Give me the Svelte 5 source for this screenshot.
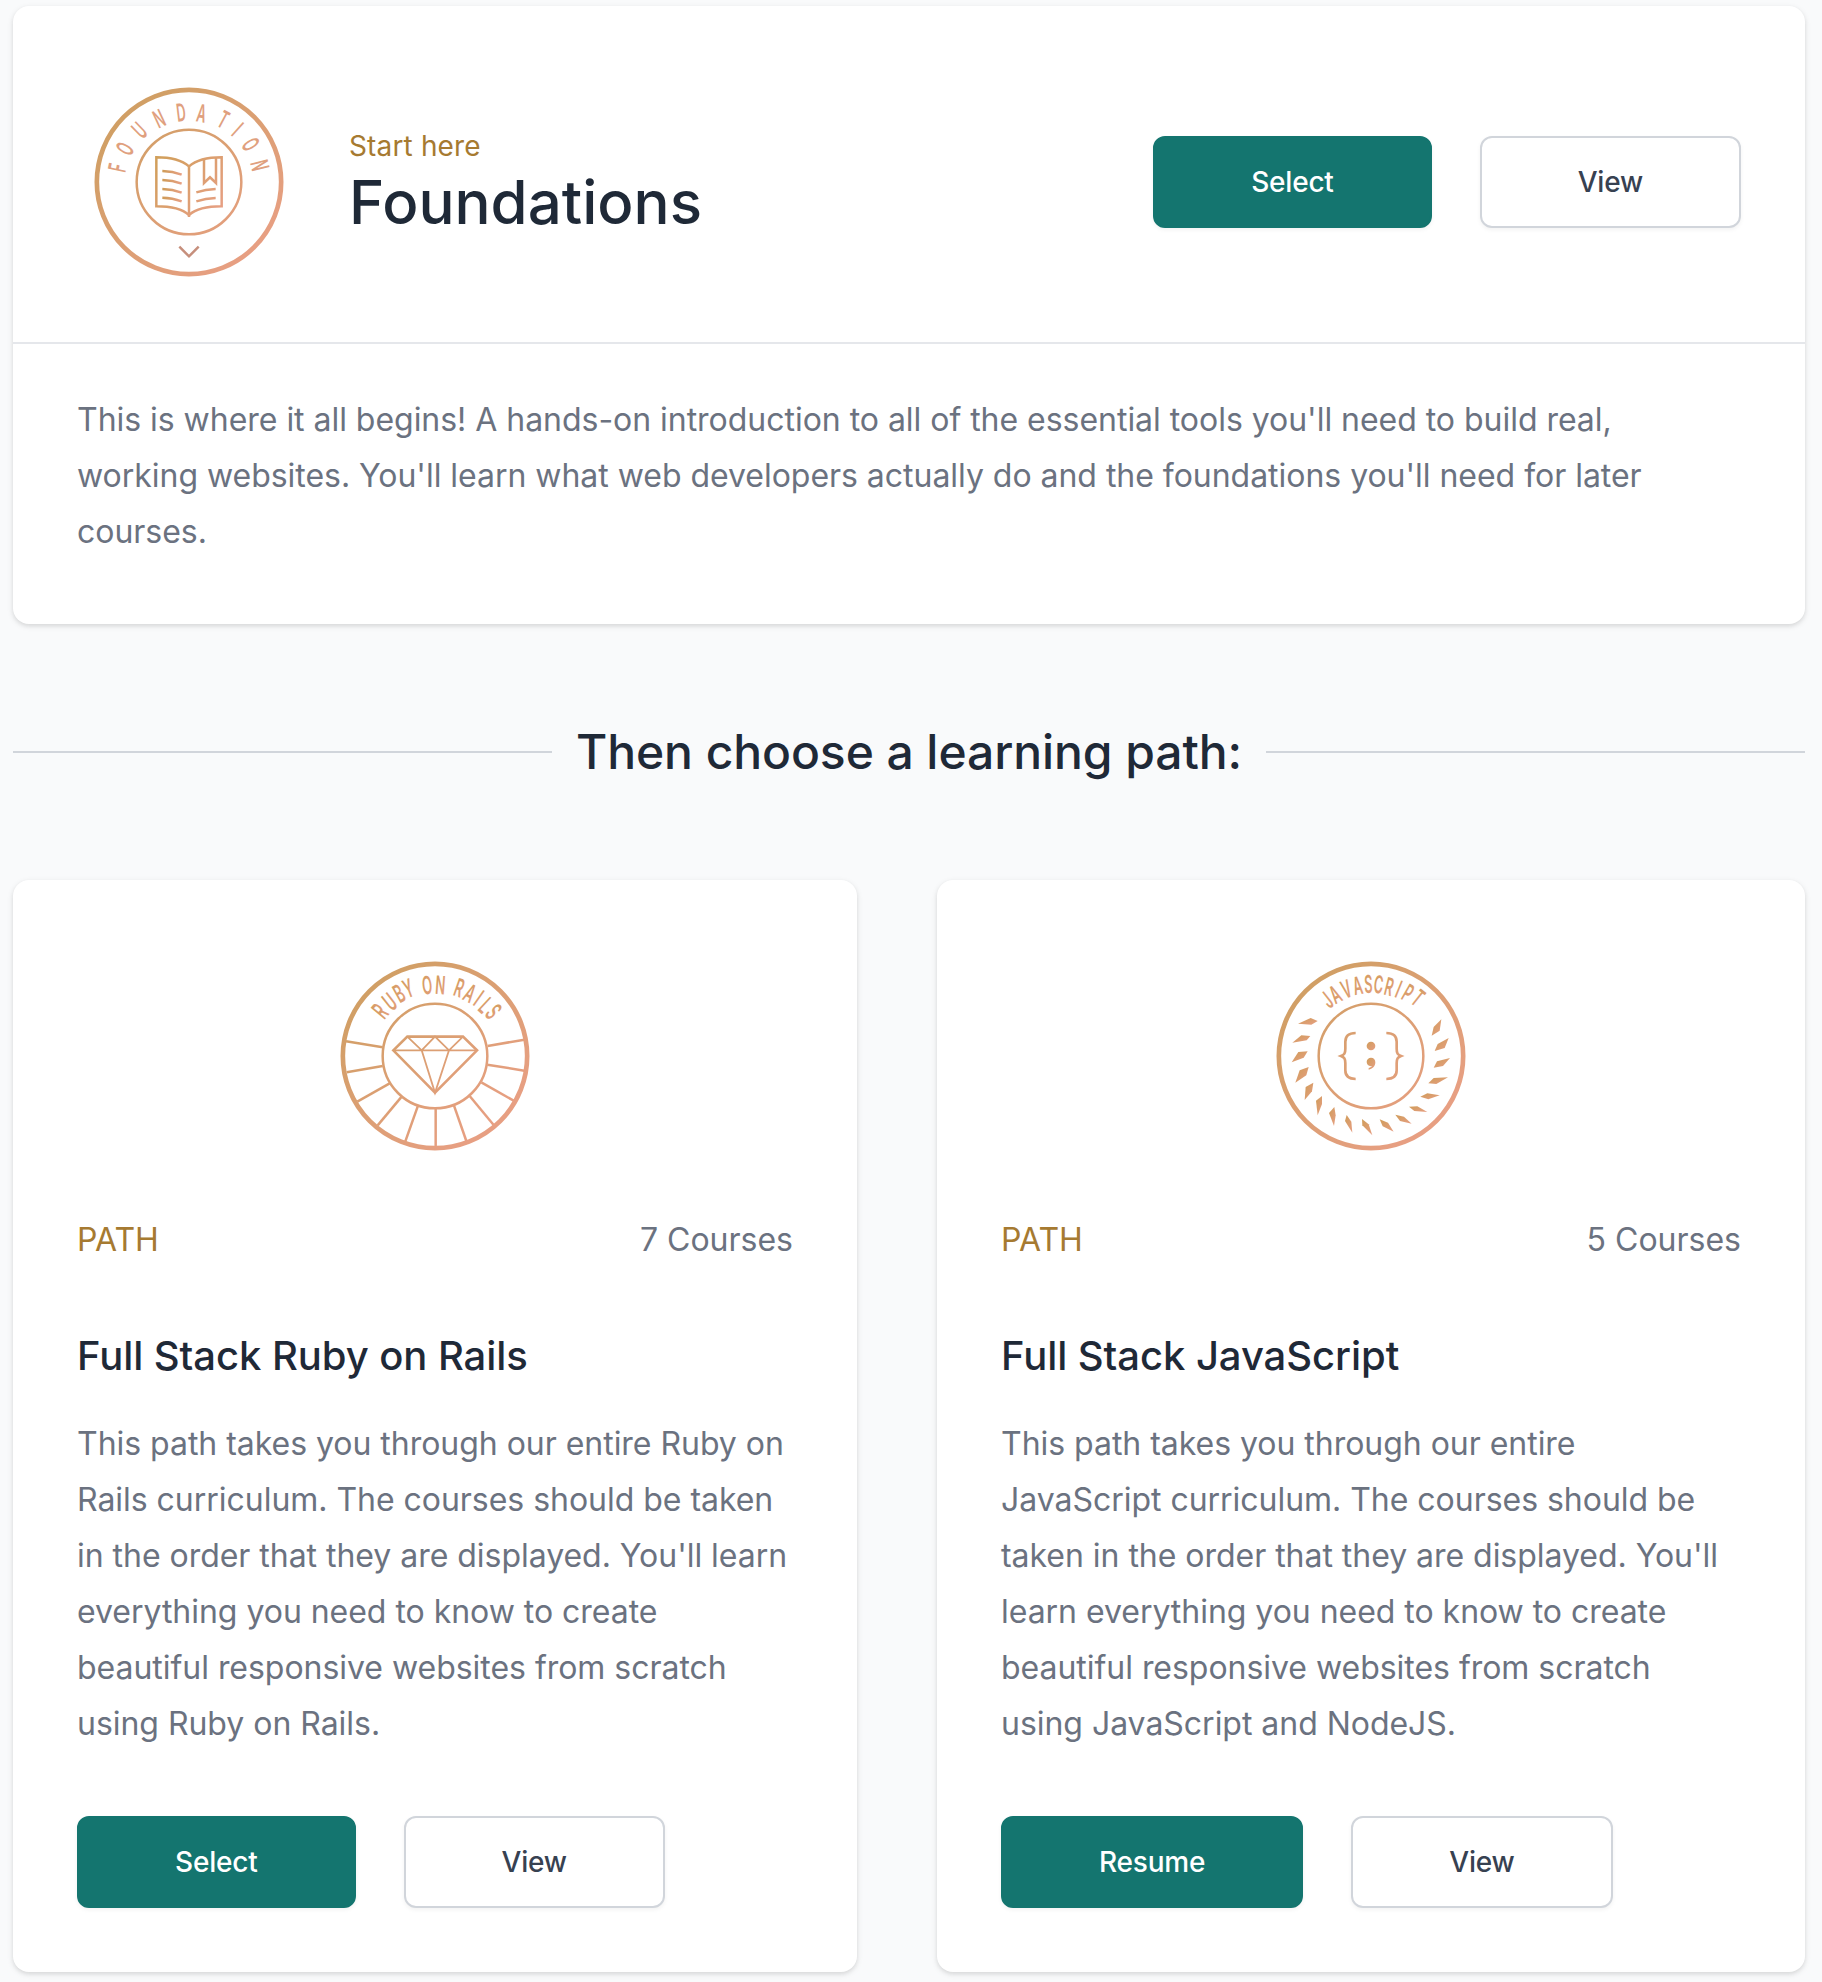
<script>
  // Curved badge lettering: [character, x, y, rotation in degrees]
  const foundation = [
    ['F', 100, 275, -78], ['O', 123, 218, -62], ['U', 166, 163, -44], ['N', 225, 128, -25],
    ['D', 291, 109, -7], ['A', 353, 112, 10], ['T', 418, 130, 28], ['I', 461, 160, 42],
    ['O', 500, 205, 59], ['N', 528, 268, 76]
  ];
  const ruby = [
    ['R', 150, 213, -50], ['U', 179, 185, -38], ['B', 207, 160, -29], ['Y', 235, 145, -20],
    ['O', 291, 135, -6], ['N', 331, 135, 4], ['R', 388, 143, 19], ['A', 420, 159, 28],
    ['I', 446, 174, 35], ['L', 467, 196, 43], ['S', 491, 215, 50]
  ];
  const javascript = [
    ['J', 183, 180, -38], ['A', 208, 163, -29], ['V', 241, 147, -20], ['A', 275, 137, -11],
    ['S', 307, 132, -2], ['C', 338, 133, 6], ['R', 370, 140, 14], ['I', 398, 147, 22],
    ['P', 426, 158, 30], ['T', 456, 173, 38]
  ];
  const rays = [
    [158, 322, 48, 304], [158, 378, 50, 397], [179, 430, 82, 485], [215, 470, 143, 556],
    [264, 497, 226, 604], [317, 507, 317, 620], [372, 497, 409, 603], [419, 468, 491, 555],
    [454, 427, 551, 482], [472, 374, 583, 392], [473, 318, 583, 299]
  ];
  const leaves = [
    '96,251 134,234 155,243 136,254', '79,308 106,286 133,288 122,301',
    '77,367 97,336 125,334 113,353', '88,428 101,391 128,381 121,406',
    '116,480 119,441 142,428 138,454', '155,526 150,482 168,468 168,492',
    '204,558 189,519 205,501 209,526', '259,578 237,543 242,525 256,545',
    '319,586 289,556 288,537 308,553', '383,575 350,559 341,538 366,548',
    '437,551 402,543 388,524 414,530', '484,516 445,513 429,500 454,499',
    '521,466 487,478 463,470 484,460', '546,412 511,432 487,430 503,414',
    '552,354 531,378 503,383 513,364', '548,294 536,324 506,333 515,312',
    '526,238 521,272 497,287 503,261'
  ];

  const paths = [
    {
      badge: 'ruby', courses: 7, title: 'Full Stack Ruby on Rails', action: 'Select',
      text: "This path takes you through our entire Ruby on Rails curriculum. The courses should be taken in the order that they are displayed. You'll learn everything you need to know to create beautiful responsive websites from scratch using Ruby on Rails."
    },
    {
      badge: 'javascript', courses: 5, title: 'Full Stack JavaScript', action: 'Resume',
      text: "This path takes you through our entire JavaScript curriculum. The courses should be taken in the order that they are displayed. You'll learn everything you need to know to create beautiful responsive websites from scratch using JavaScript and NodeJS."
    }
  ];
</script>

{#snippet lettering(letters, size, fill)}
  {#each letters as [ch, x, y, r]}
    <text class="rune" font-size={size} {fill} transform="translate({x} {y}) rotate({r}) scale(.52 1)" y={size * 0.364}>{ch}</text>
  {/each}
{/snippet}

<svg class="defs" width="0" height="0" aria-hidden="true">
  <defs>
    <linearGradient id="copper" gradientUnits="userSpaceOnUse" x1="120" y1="150" x2="480" y2="540">
      <stop offset="0" stop-color="#d19f65" /><stop offset="1" stop-color="#e79f82" />
    </linearGradient>
    <linearGradient id="book" gradientUnits="userSpaceOnUse" x1="220" y1="250" x2="410" y2="410">
      <stop offset="0" stop-color="#d19f5b" /><stop offset="1" stop-color="#e79f84" />
    </linearGradient>
    <linearGradient id="part" x1="0" y1="0" x2="1" y2="1">
      <stop offset="0" stop-color="#cf9c58" /><stop offset="1" stop-color="#e79f84" />
    </linearGradient>
    <linearGradient id="row" gradientUnits="userSpaceOnUse" x1="236" y1="0" x2="294" y2="0">
      <stop offset="0" stop-color="#cf9c58" /><stop offset="1" stop-color="#e79f84" />
    </linearGradient>
  </defs>
</svg>

<main>
  <section class="card">
    <header>
      <svg class="badge" viewBox="27 30 576 576" fill="none" stroke="url(#copper)">
        <circle cx="315" cy="318" r="276.500" stroke-width="14" />
        <circle cx="315" cy="318" r="157" stroke-width="7.500" />
        <g stroke="url(#book)" stroke-width="7.500">
          <path d="M315 271Q284 244 217 244V391Q286 391 315 417Q345 391 413 391V244Q346 244 315 271Z" />
          <path d="M315 271V423M360 249V321L378 304L396 321V246" />
          <path d="M337 349Q365 340 395 339M337 376Q365 367 395 366" />
        </g>
        <g stroke="url(#row)" stroke-width="7.500">
          <path d="M235 285Q266 286 293 296M235 312Q266 313 293 323M235 339Q266 340 293 350M235 365Q266 366 293 376" />
        </g>
        <path d="M286 512L315 541L344 512" stroke="#c68f7c" stroke-width="7.500" />
        <g stroke="none">{@render lettering(foundation, 74, '#e0a07e')}</g>
      </svg>
      <div class="heading">
        <p class="eyebrow">Start here</p>
        <h1>Foundations</h1>
      </div>
      <div class="actions">
        <button class="primary">Select</button>
        <button>View</button>
      </div>
    </header>
    <p class="intro">This is where it all begins! A hands-on introduction to all of the essential tools you'll need to build real, working websites. You'll learn what web developers actually do and the foundations you'll need for later courses.</p>
  </section>

  <div class="divider"><h2>Then choose a learning path:</h2></div>

  <div class="paths">
    {#each paths as path}
      <article class="card path">
        <svg class="badge" viewBox="27 60 576 576" fill="none" stroke="url(#copper)">
          <circle cx="315" cy="348" r="276.500" stroke-width="14" />
          <circle cx="315" cy="348" r="157" stroke-width="7.500" />
          {#if path.badge === 'ruby'}
            {#each rays as [x1, y1, x2, y2]}
              <path d="M{x1} {y1}L{x2} {y2}" stroke-width="7.500" />
            {/each}
            <path d="M190 331L232 290H399L441 331L315 458Z" stroke-width="8" />
            <path d="M190 331H441M232 290L275 331L315 290L357 331L399 290M275 331L315 458L357 331" stroke-width="5.500" />
            <g stroke="none">{@render lettering(ruby, 76, 'url(#part)')}</g>
          {:else}
            {#each leaves as points}
              <polygon {points} fill="url(#part)" stroke="none" />
            {/each}
            <path d="M269 279C247 279 238 289 238 305V326C238 340 235 344 225 348C235 352 238 356 238 370V391C238 407 247 417 269 417" stroke-width="8" />
            <path d="M361 279C383 279 392 289 392 305V326C392 340 395 344 405 348C395 352 392 356 392 370V391C392 407 383 417 361 417" stroke-width="8" />
            <g fill="url(#part)" stroke="none">
              <circle cx="315" cy="318" r="13" />
              <path d="M315 353C323 353 328 359 328 367C328 379 319 387 308 389V384C315 382 318 379 318 378C309 380 302 374 302 366C302 358 308 353 315 353Z" />
            </g>
            <g stroke="none">{@render lettering(javascript, 74, 'url(#part)')}</g>
          {/if}
        </svg>
        <div class="meta"><span class="label">PATH</span><span>{path.courses} Courses</span></div>
        <h3>{path.title}</h3>
        <p class="summary">{path.text}</p>
        <div class="actions">
          <button class="primary">{path.action}</button>
          <button>View</button>
        </div>
      </article>
    {/each}
  </div>
</main>

<style>
  :global(body) { background: #f9fafb; }
  * { box-sizing: border-box; }
  h1, h2, h3, p { margin: 0; font-weight: 500; }
  .defs { display: block; }
  main {
    padding: 6px 17px 10px 13px;
    font-family: Inter, "Liberation Sans", sans-serif;
    font-size: 32px;
    color: #6b7280;
  }
  .card {
    background: #fff;
    border-radius: 16px;
    box-shadow: 0 2px 6px rgba(0, 0, 0, .1), 0 2px 4px rgba(0, 0, 0, .06);
  }
  header {
    display: flex;
    align-items: center;
    height: 338px;
    padding: 80px 64px 64px 80px;
    border-bottom: 2px solid #e5e7eb;
  }
  .badge { display: block; width: 192px; height: 192px; flex: none; }
  .rune { font-family: Inter, sans-serif; font-weight: 600; text-anchor: middle; }
  .heading { margin-left: 64px; }
  .eyebrow { font-size: 28px; line-height: 40px; font-weight: 400; letter-spacing: .15px; color: #a67a31; }
  h1 { font-size: 60px; line-height: 72px; color: #1f2937; }
  .actions { display: flex; gap: 48px; }
  header .actions { margin-left: auto; }
  button {
    height: 92px;
    padding: 0 96px;
    border: 2px solid #d1d5db;
    border-radius: 12px;
    background: #fff;
    box-shadow: 0 2px 4px rgba(0, 0, 0, .05);
    font: 500 28px/40px Inter, "Liberation Sans", sans-serif;
    letter-spacing: -.2px;
    color: #374151;
  }
  .primary { border-color: #14756f; background: #14756f; color: #fff; }
  .intro { padding: 48px 80px 64px 64px; font-weight: 400; line-height: 56px; letter-spacing: -.03px; }
  .divider {
    display: flex;
    align-items: center;
    gap: 24px;
    height: 256px;
  }
  .divider::before, .divider::after { content: ""; flex: 1; height: 2px; background: #d1d5db; }
  h2 { font-size: 48px; line-height: 64px; letter-spacing: -.08px; color: #1f2937; }
  .paths { display: grid; grid-template-columns: 844px 868px; gap: 80px; }
  .path { height: 1092px; padding: 80px 64px 64px; display: flex; flex-direction: column; }
  .path .badge { align-self: center; }
  .meta { display: flex; justify-content: space-between; margin-top: 64px; line-height: 48px; }
  .label { color: #a67a31; }
  h3 { margin-top: 64px; font-size: 40px; line-height: 56px; letter-spacing: -.06px; color: #1f2937; }
  .summary { margin-top: 32px; font-weight: 400; line-height: 56px; letter-spacing: -.03px; }
  .path .actions { margin-top: auto; }
</style>
